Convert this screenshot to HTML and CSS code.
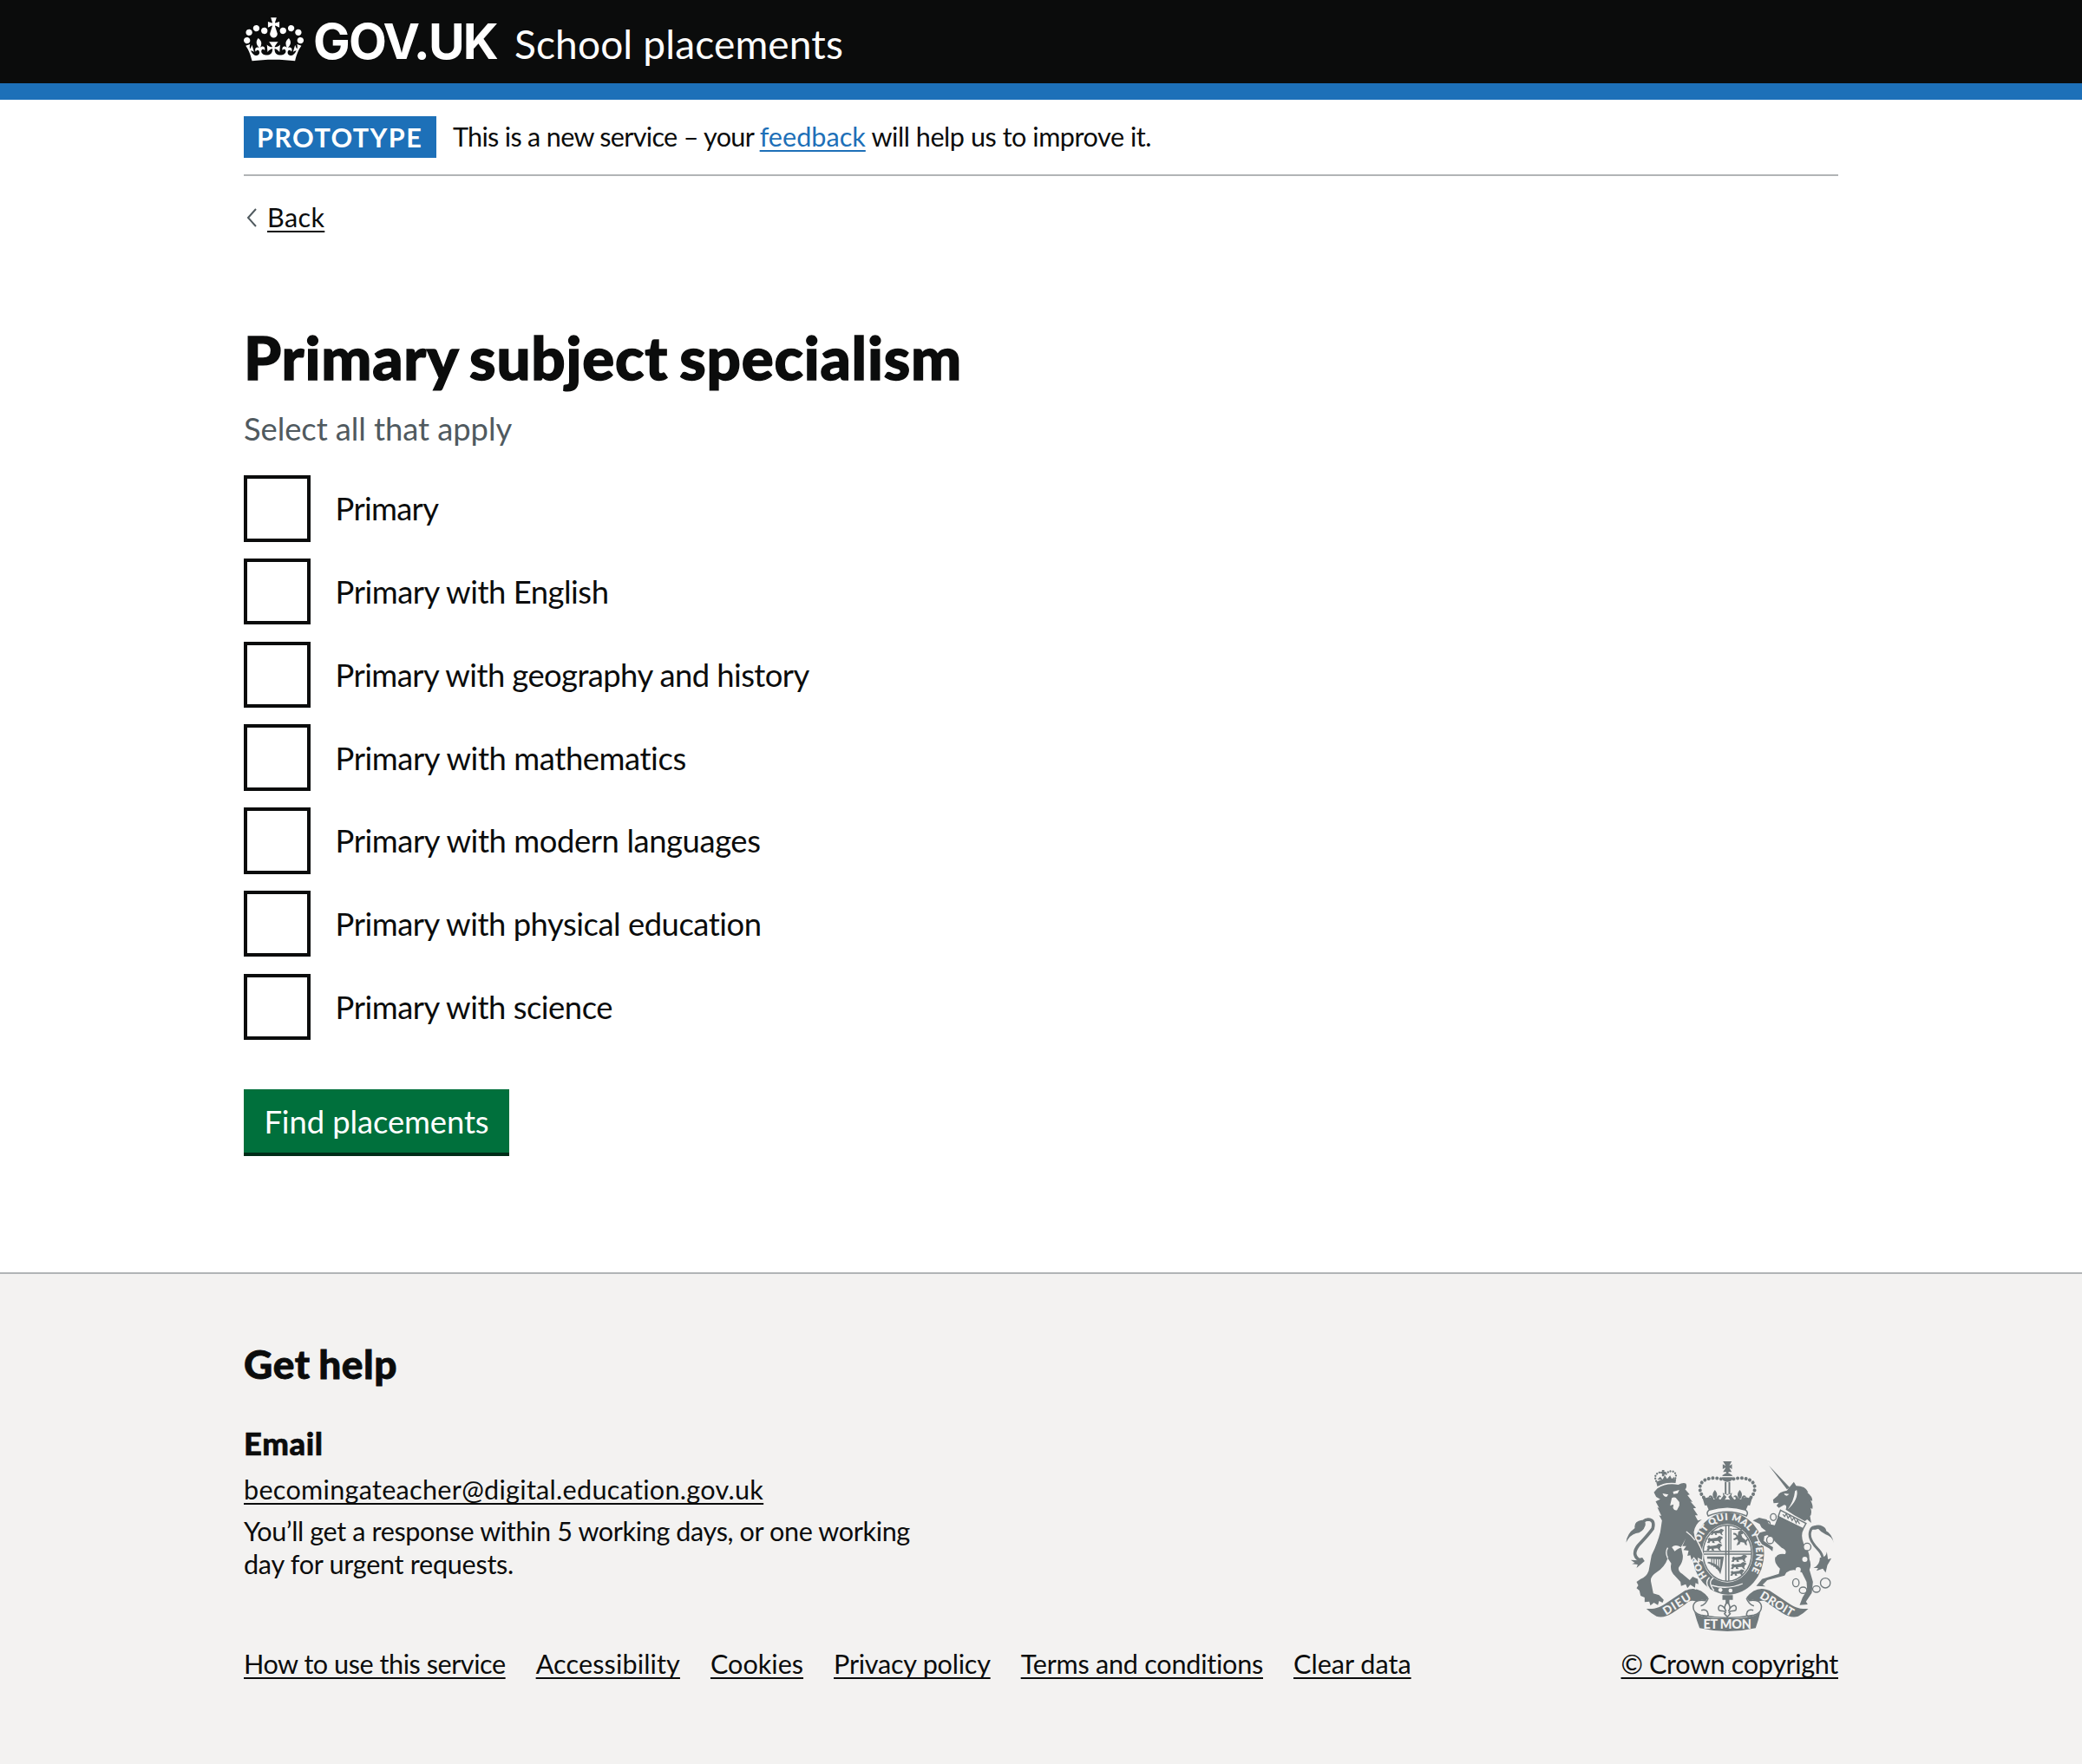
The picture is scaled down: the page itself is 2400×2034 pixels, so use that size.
FILE: index.html
```html
<!DOCTYPE html>
<html lang="en">
<head>
<meta charset="utf-8">
<title>Primary subject specialism - School placements</title>
<link rel="stylesheet" href="styles.css">
</head>
<body>
<header class="header">
  <div class="container header-inner">
    <svg class="crown" viewBox="0 0 132 97" aria-hidden="true"><path d="M25 30.2c3.5 1.5 7.7-.2 9.1-3.7 1.5-3.6-.2-7.8-3.9-9.2-3.6-1.4-7.6.3-9.1 3.9-1.4 3.5.3 7.5 3.9 9zM9 39.5c3.6 1.5 7.8-.2 9.2-3.7 1.5-3.6-.2-7.8-3.9-9.1-3.6-1.5-7.6.2-9.1 3.8-1.4 3.5.3 7.5 3.8 9zM4.4 57.2c3.5 1.5 7.7-.2 9.1-3.8 1.5-3.6-.2-7.7-3.9-9.1-3.5-1.5-7.6.3-9.1 3.8-1.4 3.5.3 7.6 3.9 9.1zm38.3-21.4c3.5 1.5 7.7-.2 9.1-3.8 1.5-3.6-.2-7.7-3.9-9.1-3.6-1.5-7.6.3-9.1 3.8-1.3 3.6.4 7.7 3.9 9.1zm64.4-5.6c-3.6 1.5-7.8-.2-9.1-3.7-1.5-3.6.2-7.8 3.8-9.2 3.6-1.4 7.7.3 9.2 3.9 1.3 3.5-.4 7.5-3.9 9zm15.9 9.3c-3.6 1.5-7.7-.2-9.1-3.7-1.5-3.6.2-7.8 3.7-9.1 3.6-1.5 7.7.2 9.2 3.8 1.5 3.5-.3 7.5-3.8 9zm4.7 17.7c-3.6 1.5-7.8-.2-9.2-3.8-1.5-3.6.2-7.7 3.9-9.1 3.6-1.5 7.7.3 9.2 3.8 1.3 3.5-.4 7.6-3.9 9.1zM89.3 35.8c-3.6 1.5-7.8-.2-9.2-3.8-1.4-3.6.2-7.7 3.9-9.1 3.6-1.5 7.7.3 9.2 3.8 1.4 3.6-.3 7.7-3.9 9.1zM69.7 17.7l8.9 4.7V9.3l-8.9 2.8c-.2-.3-.5-.6-.9-.9L72.4 0H59.6l3.5 11.2c-.3.3-.6.5-.9.9l-8.8-2.8v13.1l8.8-4.7c.3.3.6.7.9.9l-5 15.4v.1c-.2.8-.4 1.6-.4 2.4 0 4.1 3.1 7.5 7 8.1h.2c.3 0 .7.1 1 .1.4 0 .7 0 1-.1h.2c4-.6 7.1-4.1 7.1-8.1 0-.8-.1-1.7-.4-2.4V34l-5.1-15.4c.4-.2.7-.6 1-.9zM66 92.8c16.9 0 32.8 1.1 47.1 3.2 4-16.9 8.9-26.7 14-33.5l-9.6-3.4c1 4.9 1.1 7.2 0 10.2-1.5-1.4-3-4.3-4.2-8.7L108.6 76c2.8-2 5-3.2 7.5-3.3-4.4 9.4-10 11.9-13.6 11.2-4.3-.8-6.3-4.6-5.6-7.9 1-4.7 5.7-5.9 8-.5 4.3-8.7-3-11.4-7.6-8.8 7.1-7.2 7.9-13.5 2.1-21.1-8 6.1-8.1 12.3-4.5 20.8-4.7-5.4-12.1-2.5-9.5 6.2 3.4-5.2 7.9-2 7.2 3.1-.6 4.3-6.4 7.8-13.5 7.2-10.3-.9-10.9-8-11.2-13.8 2.5-.5 7.1 1.8 11 7.3L80.2 60c-4.1 4.4-8 5.3-12.3 5.4 1.4-4.4 8-11.6 8-11.6H55.5s6.4 7.2 7.9 11.6c-4.2-.1-8-1-12.3-5.4l1.4 16.4c3.9-5.5 8.5-7.7 10.9-7.3-.3 5.8-.9 12.8-11.1 13.8-7.2.6-12.9-2.9-13.5-7.2-.7-5 3.8-8.3 7.1-3.1 2.7-8.7-4.6-11.6-9.4-6.2 3.7-8.5 3.6-14.7-4.6-20.8-5.8 7.6-5 13.9 2.2 21.1-4.7-2.6-11.9.1-7.7 8.8 2.3-5.5 7.1-4.2 8.1.5.7 3.3-1.3 7.1-5.7 7.9-3.5.7-9-1.8-13.5-11.2 2.5.1 4.7 1.3 7.5 3.3l-4.7-15.4c-1.2 4.4-2.7 7.2-4.3 8.7-1.1-3-.9-5.3 0-10.2l-9.5 3.4c5 6.9 9.9 16.7 14 33.5 14.8-2.1 30.8-3.2 47.7-3.2z"/></svg>
    <span class="logotype">GOV.UK</span>
    <span class="product">School placements</span>
  </div>
</header>

<div class="container">
  <div class="phase">
    <strong class="tag">PROTOTYPE</strong>
    <span class="phase-text"><span class="phase-a">This is a new service – your </span><a class="link-blue" href="#">feedback</a><span class="phase-b"> will help us to improve it.</span></span>
  </div>
  <div class="back">
    <svg class="chevron" viewBox="0 0 12 22" aria-hidden="true"><path d="M11 1 2 11l9 10"/></svg>
    <a href="#">Back</a>
  </div>
  <main class="main">
    <h1>Primary subject specialism</h1>
    <p class="hint">Select all that apply</p>
    <div class="checkboxes">
      <div class="item"><span class="box"></span><span class="label">Primary</span></div>
      <div class="item"><span class="box"></span><span class="label">Primary with English</span></div>
      <div class="item"><span class="box"></span><span class="label">Primary with geography and history</span></div>
      <div class="item"><span class="box"></span><span class="label">Primary with mathematics</span></div>
      <div class="item"><span class="box"></span><span class="label">Primary with modern languages</span></div>
      <div class="item"><span class="box"></span><span class="label">Primary with physical education</span></div>
      <div class="item"><span class="box"></span><span class="label">Primary with science</span></div>
    </div>
    <button class="button" type="button">Find placements</button>
  </main>
</div>

<footer class="footer">
  <div class="container footer-inner">
    <div class="footer-main">
      <h2>Get help</h2>
      <h3>Email</h3>
      <p class="mail"><a href="#">becomingateacher@digital.education.gov.uk</a></p>
      <p class="response"><span class="response-a">You’ll get a response within 5 working days, or one working</span><br><span class="response-b">day for urgent requests.</span></p>
      <nav class="links">
        <a href="#">How to use this service</a>
        <a href="#">Accessibility</a>
        <a href="#">Cookies</a>
        <a href="#">Privacy policy</a>
        <a href="#">Terms and conditions</a>
        <a href="#">Clear data</a>
      </nav>
    </div>
    <div class="copyright">
      <svg class="crest" viewBox="25.5 0 751.5 660" aria-hidden="true">
        <defs>
          <path id="garter" d="M322 443A99 115 0 1 1 464 443"/>
          <g id="lis"><path d="M0-22C-10-10-9-2-3 8h6C9-2 10-10 0-22zM-5 10C-6-4-20-8-22 4c4-4 8-2 8 4 0 5 5 8 9 6zM5 10C6-4 20-8 22 4c-4-4-8-2-8 4 0 5-5 8-9 6z"/></g>
          <g id="passant"><path d="M0 8l8-6 4 3 22-3 8-6 8 2 5 5-6 4-3 8 5 7-7-2-6-7-14 1 3 7-9-1-1-6-6 1-3 6-8-1 4-7-1-5z"/></g>
        </defs>
        <!-- motto ribbon -->
        <path class="ink" d="M112 555C145 557 160 549 184 533L246 492Q292 472 326 516L318 527Q300 521 284 530Q264 521 246 540L203 569Q172 589 147 581Q128 571 112 555z"/>
        <path class="ink" d="M672 555C639 557 624 549 600 533L538 492Q492 472 458 516L466 527Q484 521 500 530Q520 521 538 540L581 569Q612 589 637 581Q656 571 672 555z"/>
        <path class="wire" d="M318 527Q276 521 274 548Q274 570 300 577Q332 590 324 568Q320 556 302 560M326 518Q318 540 300 545M466 527Q508 521 510 548Q510 570 484 577Q452 590 460 568Q464 556 482 560M458 518Q466 540 484 545M300 577Q392 596 484 577"/>
        <path class="ink" d="M278 566Q300 590 392 588Q484 590 506 566Q500 592 490 622Q392 644 296 622Q285 592 278 566z"/>
        <text class="motto" transform="translate(180 578) rotate(-32)" textLength="106">DIEU</text>
        <text class="motto" transform="translate(502 517) rotate(31)" textLength="128">DROIT</text>
        <text class="motto mon" x="309" y="623" textLength="166">ET MON</text>
        <!-- pendant -->
        <path class="ink" d="M375 508h36v16h-12v14h-13v-14h-11z"/>
        <path class="wire" d="M392 532C380 545 382 556 388 564C372 530 356 546 363 560C370 566 380 558 386 568L382 572L392 583L402 572L398 568C404 558 414 566 421 560C428 546 412 530 396 564C402 556 404 545 392 532z"/>
        <!-- garter -->
        <ellipse class="ink" cx="395" cy="364" rx="124" ry="142"/>
        <ellipse class="paper" cx="392" cy="363" rx="88" ry="101"/>
        <ellipse class="wire" cx="392" cy="363" rx="84" ry="97"/>
        <path class="paperline" d="M338 474Q392 490 445 468"/>
        <circle class="paper" cx="368" cy="490" r="7"/><circle class="paper" cx="403" cy="492" r="7"/>
        <path class="paperline" d="M344 448Q322 462 346 492M330 446Q312 464 330 486"/>
        <text class="honi" textLength="488"><textPath href="#garter">HONI SOIT QUI MAL Y PENSE</textPath></text>
        <!-- royal arms -->
        <path class="wire" d="M387 267v192M397 267v192M309 357h166M309 366h166"/>
        <g class="ink">
          <use href="#passant" transform="translate(334 282) scale(.85)"/><use href="#passant" transform="translate(322 307)"/><use href="#passant" transform="translate(320 333)"/>
          <use href="#passant" transform="translate(406 372)"/><use href="#passant" transform="translate(404 397)"/><use href="#passant" transform="translate(402 422) scale(.9)"/>
          <path d="M414 292l8 2 6 8 2-14 8-4 10 4-2 8-6 2 4 10 12 10 4-6 4 4-6 8 2 12-6-2-4-8-12-2-4 8-10 4 2-6 4-8-4-8-10 4-4-4 12-8-4-6-8-2z"/>
          <path d="M322 374l58 0q-4 30-12 62-10-28-46-40l6-4q26 6 38 22 2-20 2-30l-46-2z"/>
        </g>
        <path class="thin" d="M338 380v26M346 380v30M354 380v36M362 380v42M408 280h52M404 276v76"/>
        <!-- imperial crown -->
        <path class="ink" d="M317 188Q392 166 467 188L456 214Q392 194 328 214zM377 45h30l-7 13v2l8-5v17l-8-5v3l7 12h-30l8-12v-3l-9 5V55l9 5v-2z"/>
        <ellipse class="ink" cx="392" cy="101" rx="19" ry="15"/>
        <path class="ink" d="M388 80h8v10h-8zM383 116h6v42h-6zM396 116h6v42h-6z"/>
        <path class="paperline" d="M373 98h38"/>
        <path class="dots" d="M370 106C340 98 296 104 297 140Q299 158 312 172M414 106C444 98 488 104 487 140Q485 158 472 172"/>
        <path class="ink" d="M304 164l14 8 12-4 12 10 14-6 12 6 10-14-2-10 16 8 16-8-2 10 10 14 12-6 14 6 12-10 12 4 14-8-10 34q-78-20-156 0zM379 158l10 10-7 12h21l-8-12 10-10z"/>
        <use class="ink" href="#lis" transform="translate(349 166)"/><use class="ink" href="#lis" transform="translate(435 166)"/>
        <path class="wire ermine" d="M328 214Q392 192 456 214Q466 222 458 234Q392 206 326 234Q318 222 328 214z"/>
        <!-- lion -->
        <path class="dots small" d="M146 113Q136 92 156 84Q168 80 178 92Q188 76 204 80Q220 88 211 106"/>
        <path class="ink" d="M146 116Q178 100 215 106L213 120Q178 116 150 132zM166 75h8v6h6v6h-6v10h-8v-10h-5v-6h5zM150 108l10-10 8 10 8-14 8 12 10-12 6 12 8-8v12z"/>
        <path class="ink cut" d="M138 152L150 139Q182 118 222 126Q240 116 249 122Q254 134 246 142L262 160L254 162L272 186L264 184L284 206L274 208L290 232L280 232L290 250L304 246Q280 262 276 290L280 312Q296 336 306 366L304 386L290 378L290 392L276 376L268 386L264 370L254 372L258 354L240 352L250 338L232 338Q236 360 238 370Q240 392 224 412Q220 424 236 434L262 456L272 444L290 452L292 470L282 466L280 482L264 472L254 484L248 470L232 476L230 462L210 440Q192 424 198 398L186 380Q176 410 146 430Q124 444 128 462L136 502L156 508L172 524L168 534L156 528L152 542L138 534L126 544L122 530L106 532L106 516L92 510L88 492L78 484L84 474L78 462L92 452Q112 446 120 424L130 370Q150 330 160 290L166 250L156 232L164 234L150 204L156 206L144 184L160 176L146 168z"/>
        <path class="paper" d="M168 156l20 4-6 8q-10 0-14-12zM204 150l22-6-6 12-14 2zM200 172q12-6 18 4l8 10 0 12-8 16q-10 2-14-8l2-12-12 4zM210 356Q236 334 240 352L236 340L248 312L232 342Q212 330 200 342z"/>
        <path class="paperline" d="M250 288Q270 302 280 318M186 380Q176 360 186 344"/>
        <path class="tail" d="M96 392Q56 372 84 336Q118 300 134 278Q142 246 118 246Q100 248 88 268"/>
        <path class="ink" d="M42 326Q44 296 72 276Q68 252 96 248Q112 250 108 268Q100 292 76 294Q54 300 42 326zM98 378l-18 4 8 6-30-2 14 10-10 4 20 2-4 12 28-24z"/>
        <!-- unicorn -->
        <path class="ink" d="M536 60L608 136L598 142z"/>
        <path class="ink" d="M604 138L622 116L630 130Q662 130 672 152L668 152Q688 168 686 182L680 180Q690 200 686 210L680 206Q686 226 678 234L682 258L668 246L660 252L624 232L594 212Q600 196 588 196L570 206L562 198L570 188L552 190L550 178L566 164Q570 150 598 146z"/>
        <path class="paper" d="M588 156l18 2-8 6q-8 0-10-8zM632 144Q640 176 600 212Q622 184 626 148z"/>
        <path class="ink cut" d="M568 234L656 280Q644 300 656 330Q676 352 676 384Q684 404 676 420L688 462L684 500L664 530L670 540L642 542L652 516L668 490L666 462L650 430Q620 412 596 430L590 440L530 456L514 472L524 478L492 476L512 452L570 434L574 416Q552 396 558 376Q568 362 592 366Q600 352 580 344L556 322L548 312L530 300L520 304L518 320L540 336L550 342L548 356L536 346L512 332L502 318L496 304L504 292L526 286L510 274L504 262L480 250L502 240L528 246L536 262L556 266z"/>
        <path class="wire" d="M576 214L664 260L654 278L568 236z"/>
        <path class="thin" d="M584 228l6 8 6-10 6 16 6-10 8 18 6-10 8 18 4-10 8 14"/>
        <path class="paperline" d="M558 376Q566 356 592 362"/>
        <g class="paper"><circle cx="660" cy="384" r="9"/><circle cx="637" cy="420" r="9"/></g>
        <g class="chain"><ellipse cx="551" cy="238" rx="10" ry="12"/><ellipse cx="531" cy="262" rx="9" ry="10"/><ellipse class="paper" cx="540" cy="317" rx="12" ry="13"/><ellipse class="paper" cx="668" cy="341" rx="13" ry="13"/><ellipse cx="629" cy="465" rx="11" ry="14"/><ellipse cx="654" cy="491" rx="13" ry="11"/><ellipse cx="700" cy="487" rx="13" ry="11"/><circle cx="731" cy="466" r="17"/></g>
        <path class="tail slim" d="M716 408Q732 380 708 352Q672 316 678 290Q684 264 706 276"/>
        <path class="ink" d="M760 328Q754 304 732 298Q716 290 706 278Q690 284 680 280Q692 262 714 266Q734 272 734 286Q754 296 760 328zM712 378Q734 380 736 358L740 384L752 380L738 404L732 430L722 416L700 424L706 414L690 414Q712 404 712 378z"/>
      </svg>
      <a href="#">© Crown copyright</a>
    </div>
  </div>
</footer>
</body>
</html>
```
FILE: styles.css
```css
* { box-sizing: border-box; }

body {
  margin: 0;
  background: #fff;
  color: #0b0c0c;
  font-family: Lato, "Noto Sans", sans-serif;
  font-size: 30.6px;
  line-height: 38px;
  font-variant-ligatures: none;
}

h1, h2, h3, p { margin: 0; }
a { color: inherit; text-decoration: underline; text-decoration-thickness: 2px; text-underline-offset: 4px; text-decoration-skip-ink: none; }

.container { width: 1838px; margin: 0 auto; }

/* Header */
.header { height: 115px; background: #0b0c0c; border-bottom: 19px solid #1d70b8; color: #fff; }
.header-inner { display: flex; align-items: baseline; height: 96px; padding-top: 18px; }
.crown { align-self: flex-start; flex: none; width: 69px; height: 51px; margin-top: 2px; fill: #fff; }
.logotype { width: 219px; margin-left: 11px; font: 700 57px/60px Inter, sans-serif; letter-spacing: -1.9px; white-space: nowrap; }
.product { margin-left: 13px; font-size: 46px; line-height: 56px; letter-spacing: .15px; }

/* Phase banner and back link */
.phase { display: flex; align-items: center; gap: 19px; height: 88px; padding: 18px 0 19px; border-bottom: 2px solid #b1b4b6; }
.tag { width: 222px; height: 48px; padding: 6px 0 0 15px; background: #1d70b8; color: #fff; font-weight: 700; letter-spacing: 1.4px; }
.phase-text { white-space: pre; margin-top: 1px; }
.phase-a { letter-spacing: -.7px; }
.phase-b { letter-spacing: -.47px; }
.link-blue { color: #1d70b8; }
.back { display: flex; align-items: center; gap: 12px; padding: 29px 0 0 3px; letter-spacing: .35px; }
.chevron { width: 12px; height: 22px; fill: none; stroke: #505a5f; stroke-width: 2; }

/* Form */
.main { padding-top: 106px; }
h1 { font-size: 69px; line-height: 72px; font-weight: 900; letter-spacing: .8px; word-spacing: -4px; -webkit-text-stroke: 1.4px; }
.hint { margin-top: 22px; color: #505a5f; font-size: 36.4px; line-height: 48px; letter-spacing: -.08px; }
.checkboxes { display: grid; gap: 19.17px; margin-top: 30px; font-size: 36.4px; line-height: 48px; letter-spacing: -.47px; }
.item { display: flex; align-items: center; height: 76.6px; }
.box { flex: none; width: 76.6px; height: 76.6px; border: 4px solid #0b0c0c; }
.label { padding: 0 0 0 29px; }
.item:nth-child(1) { letter-spacing: -.7px; }
.item:nth-child(3) { letter-spacing: -.57px; }
.item:nth-child(4), .item:nth-child(5) { letter-spacing: -.42px; }
.button { display: block; width: 306px; height: 77px; margin: 57px 0 134px; padding: 0 0 3px; border: 0; background: #00703c; box-shadow: inset 0 -4px #002d18; color: #fff; font: 36.4px/44px Lato, "Noto Sans", sans-serif; letter-spacing: -.1px; }

/* Footer */
.footer { height: 567px; border-top: 2px solid #b1b4b6; background: #f3f2f1; }
.footer-inner { display: flex; justify-content: space-between; }
.footer-main { padding-top: 76px; }
h2 { font-size: 46px; line-height: 56px; font-weight: 900; letter-spacing: .6px; word-spacing: -2px; -webkit-text-stroke: .8px; }
h3 { margin-top: 39px; font-size: 36.4px; line-height: 48px; font-weight: 900; letter-spacing: .6px; -webkit-text-stroke: .6px; }
.mail { margin-top: 11px; letter-spacing: .28px; }
.response { margin-top: 10px; }
.response-a { letter-spacing: -.38px; }
.response-b { letter-spacing: -.28px; }
.links { display: flex; gap: 35px; margin-top: 77px; letter-spacing: -.25px; white-space: nowrap; }
.links a:nth-child(1) { letter-spacing: -.46px; }
.links a:nth-child(2) { letter-spacing: .12px; }
.links a:nth-child(3), .links a:nth-child(6) { letter-spacing: 0; }
.copyright { display: flex; flex-direction: column; padding-top: 201px; letter-spacing: -.36px; }

/* Royal arms */
.crest { width: 250.5px; height: 220px; margin-bottom: 10px; }
.ink { fill: #70797c; }
.cut { stroke: #f3f2f1; stroke-width: 8; paint-order: stroke; }
.paper { fill: #f3f2f1; }
.paperline { fill: none; stroke: #f3f2f1; stroke-width: 4; }
.wire { fill: none; stroke: #70797c; stroke-width: 4.5; }
.ermine { fill: #f3f2f1; }
.thin { fill: none; stroke: #70797c; stroke-width: 3.5; }
.chain { fill: none; stroke: #70797c; stroke-width: 4; }
.tail { fill: none; stroke: #70797c; stroke-width: 11; }
.slim { stroke-width: 9; }
.dots { fill: none; stroke: #70797c; stroke-width: 12; stroke-linecap: round; stroke-dasharray: .1 14; }
.small { stroke-width: 7; stroke-dasharray: .1 9; }
.motto { fill: #f3f2f1; font-size: 40px; font-weight: 900; letter-spacing: 0; }
.mon { font-size: 43px; }
.honi { fill: #f3f2f1; stroke: #f3f2f1; stroke-width: .8; font-size: 32px; font-weight: 900; letter-spacing: 0; }
```
